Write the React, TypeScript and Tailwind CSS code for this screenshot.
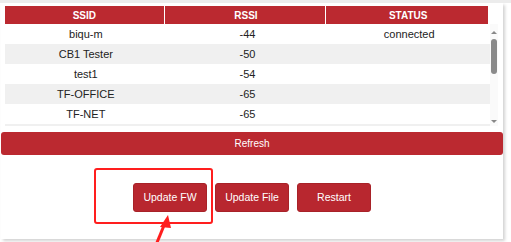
const NETWORKS = [
  { ssid: 'biqu-m', rssi: '-44', status: 'connected' },
  { ssid: 'CB1 Tester', rssi: '-50', status: '' },
  { ssid: 'test1', rssi: '-54', status: '' },
  { ssid: 'TF-OFFICE', rssi: '-65', status: '' },
  { ssid: 'TF-NET', rssi: '-65', status: '' },
]

const ACTIONS = ['Update FW', 'Update File', 'Restart']

export default function App() {
  return (
    <div
      className="relative w-[511px] h-[242px] overflow-hidden bg-white border-t-[3px] border-[#ececec] pl-[1px]"
      style={{ fontFamily: '"Liberation Sans", Arial, sans-serif' }}
    >
      <div className="w-[502px] h-[236px] bg-white shadow-[2px_2px_3px_rgba(0,0,0,0.18)] flex flex-col">
        {/* Network table */}
        <div className="pl-[4px] pt-[3px]">
          <div className="grid grid-cols-3 gap-x-[2px] w-[483px] h-[18px] bg-[#bb2930]">
            {['SSID', 'RSSI', 'STATUS'].map(h => (
              <div key={h} className="flex items-center justify-center text-white font-bold text-[10px] border-r border-white last:border-r-0">
                {h}
              </div>
            ))}
          </div>
          <div className="flex h-[102px]">
            <div className="w-[485px] overflow-hidden">
              {NETWORKS.map((n, i) => (
                <div
                  key={n.ssid}
                  className={`grid grid-cols-3 h-[20px] items-center text-center text-[11px] text-[#222] ${i % 2 ? 'bg-[#f0f0f0]' : 'bg-white'}`}
                >
                  <span>{n.ssid}</span>
                  <span>{n.rssi}</span>
                  <span>{n.status}</span>
                </div>
              ))}
              {/* next row, scrolled out of view */}
              <div className="h-[2px] bg-[#f0f0f0]" />
            </div>
            {/* Scrollbar */}
            <div className="w-[8px] flex flex-col items-center pt-[7px] pb-[3px] bg-[#fafafa]">
              <div className="w-0 h-0 border-l-[3px] border-r-[3px] border-b-[3px] border-l-transparent border-r-transparent border-b-[#888]" />
              <div className="mt-[5px] w-[6px] h-[35px] rounded-full bg-[#8a8a8a]" />
              <div className="flex-1" />
              <div className="w-0 h-0 border-l-[3px] border-r-[3px] border-t-[3px] border-l-transparent border-r-transparent border-t-[#888]" />
            </div>
          </div>
        </div>

        <button className="mt-[6px] h-[23px] w-full rounded-[3px] bg-[#bb2930] text-white text-[10px]">
          Refresh
        </button>

        <div className="mt-[28px] flex justify-center gap-[8px]">
          {ACTIONS.map(a => (
            <button
              key={a}
              className="w-[74px] h-[29px] rounded-[3px] bg-[#b8272f] border border-[#a82228] text-white text-[10.5px]"
            >
              {a}
            </button>
          ))}
        </div>
      </div>

      {/* Annotation */}
      <div className="absolute left-[94px] top-[165px] w-[119px] h-[56px] border-2 border-[#ff1e1e] rounded-[3px]" />
      <svg className="absolute left-0 top-0" width="511" height="242" viewBox="0 0 511 242">
        <line x1="156" y1="242" x2="165" y2="220" stroke="#ff1e1e" strokeWidth="3" />
        <polygon points="168,212 160,224 171,225" fill="#ff1e1e" />
      </svg>
    </div>
  )
}
